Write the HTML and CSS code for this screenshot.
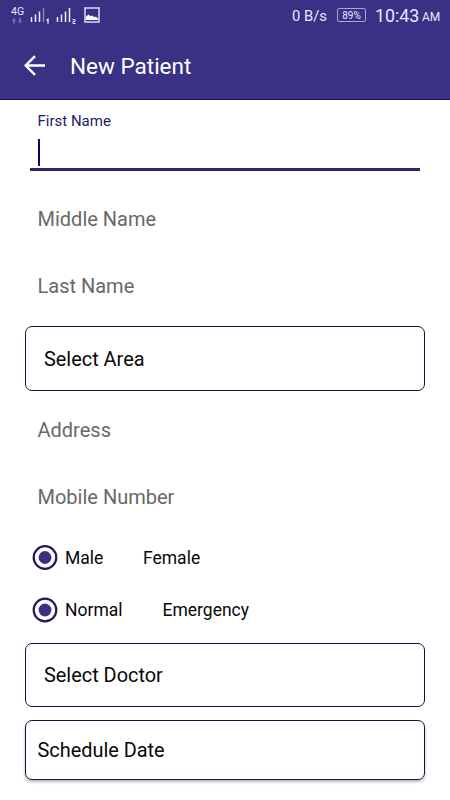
FILE: index.html
```html
<!DOCTYPE html>
<html lang="en">
<head>
<meta charset="utf-8">
<title>New Patient</title>
<link rel="stylesheet" href="styles.css">
</head>
<body>
<header class="header">
  <div class="status">
    <div class="network">
      <span class="network-type">4G</span>
      <svg width="12" height="6" viewBox="0 0 12 6"><path d="M3 0l2.700 2.800H4V5.500H2V2.800H.3zM9 5.500L6.300 2.800H8V0h2v2.800h1.700z" fill="#7069ad"/></svg>
    </div>
    <svg class="signal" width="20" height="17" viewBox="0 0 20 17">
      <path d="M1.500 14V9M5.500 14V6.500M9.500 14V3.500" stroke="#eeecff" stroke-width="1.500"/>
      <path d="M13.500 14V0" stroke="#8983c0" stroke-width="1.500"/>
      <path d="M16.500 12.200l1.500-1v4.500" fill="none" stroke="#eeecff" stroke-width="1.300"/>
    </svg>
    <svg class="signal signal-two" width="22" height="17" viewBox="0 0 22 17">
      <path d="M1.500 14V9M5.500 14V6.500M9.500 14V3.500M13.500 14V0" stroke="#eeecff" stroke-width="1.500"/>
      <path d="M16.500 11.500h2.500v2h-2v2h2.500" fill="none" stroke="#eeecff"/>
    </svg>
    <svg class="picture" width="16" height="16" viewBox="0 0 16 16"><path d="M1 1h14v14H1z" fill="none" stroke="#dedbf5" stroke-width="1.500"/><path d="M2 13V9.500L4.500 7.500l2 1.800 2-.8 1.500 1.500 2-.3 2 1.800V13z" fill="#fff"/></svg>
    <span class="speed">0 B/s</span>
    <span class="battery">89%</span>
    <span class="clock">10:43</span>
    <span class="meridiem">AM</span>
  </div>
  <div class="appbar">
    <svg width="22" height="22" viewBox="0 0 22 22"><path d="M21 10.500H2.500M11 1.200L1.700 10.500l9.300 9.300" fill="none" stroke="#fff" stroke-width="2.400"/></svg>
    <h1 class="title">New Patient</h1>
  </div>
</header>
<main class="form">
  <div class="active-field">
    <span class="label">First Name</span>
    <span class="cursor"></span>
  </div>
  <div class="field">Middle Name</div>
  <div class="field">Last Name</div>
  <div class="box area">Select Area</div>
  <div class="field">Address</div>
  <div class="field">Mobile Number</div>
  <div class="choices">
    <div class="options">
      <svg class="radio" width="26" height="26" viewBox="0 0 26 26"><circle cx="13" cy="12.500" r="11.300"/><circle class="dot" cx="13" cy="12.500" r="6.400"/></svg>
      <span class="choice choice-male">Male</span><span class="choice">Female</span>
    </div>
    <div class="options">
      <svg class="radio" width="26" height="26" viewBox="0 0 26 26"><circle cx="13" cy="13" r="11.300"/><circle class="dot" cx="13" cy="13" r="6.400"/></svg>
      <span class="choice choice-normal">Normal</span><span class="choice">Emergency</span>
    </div>
  </div>
  <div class="box doctor">Select Doctor</div>
  <div class="box date">Schedule Date</div>
</main>
</body>
</html>
```
FILE: styles.css
```css
* { box-sizing: border-box; }
body {
  margin: 0;
  height: 800px;
  overflow: hidden;
  background: #fff;
  color: #080808;
  font-family: Roboto, sans-serif;
}
.header {
  height: 100px;
  background: #393184;
  border-bottom: 1px solid #140a57;
  color: #fff;
}
.status {
  display: flex;
  height: 32px;
  color: #e9e6ff;
}
.network {
  display: flex;
  flex-direction: column;
  width: 14px;
  margin: 7px 0 0 11px;
}
.network-type { font-size: 10.5px; line-height: 10px; }
.network svg { margin-top: 1px; }
.signal { margin: 8px 0 0 5px; }
.signal-two { margin-left: 6px; }
.picture { margin: 7px 0 0 6px; }
.speed {
  width: 45px;
  margin-left: 192px;
  font-size: 14.8px;
  line-height: 32px;
  white-space: nowrap;
}
.battery {
  width: 29px;
  height: 14px;
  margin-top: 8px;
  border: 1px solid #aaa5d5;
  border-radius: 2px;
  font-size: 10px;
  line-height: 13px;
  text-align: center;
}
.clock {
  width: 47px;
  margin-left: 9px;
  font-size: 17.8px;
  line-height: 32px;
}
.meridiem { font-size: 12px; line-height: 35px; }
.appbar {
  display: flex;
  align-items: center;
  height: 67px;
  padding-left: 24px;
}
.title {
  margin: 0 0 0 24px;
  font-size: 22.5px;
  font-weight: 400;
  line-height: 30px;
}
.form { padding: 0 25px; }
.active-field {
  display: flex;
  flex-direction: column;
  height: 71px;
  margin: 0 5px 15px;
  padding: 12px 7.5px 0;
  border-bottom: 3px solid #30246f;
}
.label {
  color: #241b63;
  font-size: 15px;
  line-height: 18px;
}
.cursor {
  width: 2px;
  height: 27px;
  margin-top: 9px;
  background: #0f0653;
}
.field {
  height: 67px;
  padding-left: 12.5px;
  color: #686868;
  font-size: 20px;
  line-height: 67px;
}
.box {
  border: 1px solid #17103f;
  border-radius: 7px;
  font-size: 19.9px;
}
.area {
  height: 65px;
  margin: 6px 0;
  padding-left: 18px;
  line-height: 65px;
}
.choices { padding-top: 1px; }
.options {
  display: flex;
  align-items: center;
  height: 52px;
  padding-left: 7px;
  font-size: 17.5px;
}
.radio { fill: none; stroke: #241660; stroke-width: 2.2; }
.dot { fill: #393184; stroke: none; }
.choice { margin-left: 7px; }
.choice-male { width: 71px; }
.choice-normal { width: 90.5px; }
.doctor {
  height: 64px;
  margin-top: 7px;
  padding-left: 18px;
  line-height: 64px;
}
.date {
  height: 60px;
  margin-top: 13px;
  padding-left: 11.5px;
  line-height: 59px;
  box-shadow: 0 2px 3px rgba(0, 0, 0, .28);
}
```
